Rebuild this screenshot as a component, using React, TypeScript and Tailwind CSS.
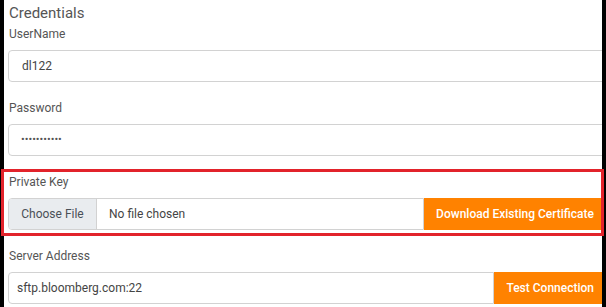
import React from "react";

const font = { fontFamily: "Roboto, 'Noto Sans', sans-serif" };

function Label({ children }: { children: React.ReactNode }) {
  return <div className="text-[12px] leading-[16px] text-[#555] mb-2 pl-[1px]">{children}</div>;
}

export default function App() {
  return (
    <div className="relative w-[606px] h-[307px] bg-black overflow-hidden" style={font}>
      <div className="absolute left-[4px] top-0 w-[598px] h-[307px] bg-white overflow-hidden">
        <div className="w-[602px] pl-[4px] pt-[3px]">
          <div className="text-[15px] leading-[20px] text-[#555] mb-[3px] pl-[1px]">Credentials</div>

          <Label>UserName</Label>
          <div className="h-[32px] border border-[#d2d2d2] rounded-[4px] flex items-center pl-[13px] text-[12px] text-[#444] mb-[18px]">
            dl122
          </div>

          <Label>Password</Label>
          <div className="h-[32px] border border-[#d2d2d2] rounded-[4px] flex items-center pl-[12px] text-[11px] text-[#555] mb-[18px]">
            •••••••••••
          </div>

          <Label>Private Key</Label>
          <div className="h-[32px] flex mb-[18px]">
            <div className="flex-1 flex border border-[#d2d2d2] rounded-l-[4px] overflow-hidden">
              <div className="w-[88px] bg-[#e9ecef] border-r border-[#d2d2d2] flex items-center justify-center text-[12px] text-[#495057]">
                Choose File
              </div>
              <div className="flex items-center pl-[12px] text-[12px] text-[#444]">No file chosen</div>
            </div>
            <div className="bg-[#ff8200] text-white font-medium text-[12px] flex items-center px-[12px]">
              Download Existing Certificate
            </div>
          </div>

          <Label>Server Address</Label>
          <div className="h-[32px] flex">
            <div className="flex-1 flex items-center border border-[#d2d2d2] rounded-l-[4px] pl-[8px] text-[12px] text-[#444]">
              sftp.bloomberg.com:22
            </div>
            <div className="bg-[#ff8200] text-white font-medium text-[12px] flex items-center px-[12px]">
              Test Connection
            </div>
          </div>
        </div>
      </div>
      <div className="absolute left-[1px] top-[169px] w-[603px] h-[67px] border-[3px] border-[#e2232b] pointer-events-none" />
    </div>
  );
}
